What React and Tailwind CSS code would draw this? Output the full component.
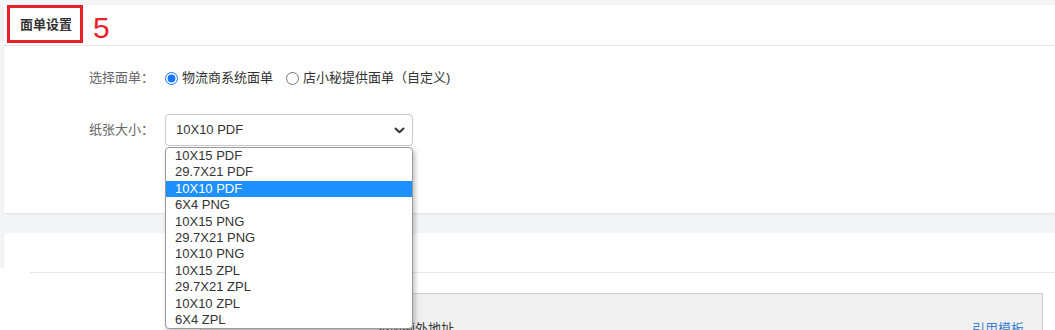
import React from "react";

const options = [
  "10X15 PDF",
  "29.7X21 PDF",
  "10X10 PDF",
  "6X4 PNG",
  "10X15 PNG",
  "29.7X21 PNG",
  "10X10 PNG",
  "10X15 ZPL",
  "29.7X21 ZPL",
  "10X10 ZPL",
  "6X4 ZPL",
];

export default function App() {
  return (
    <div
      className="relative w-[1055px] h-[330px] overflow-hidden bg-[#f3f4f5] pt-[5px] pl-[4px]"
      style={{ fontFamily: '"Liberation Sans", "Noto Sans CJK SC", sans-serif' }}
    >
      {/* Card 1 */}
      <div className="bg-white h-[208px] shadow-[0_1px_2px_rgba(0,0,0,0.07)]">
        <div className="h-[41px] border-b border-[#e6e6e6] flex items-center pl-[16px]">
          <span className="text-[13px] font-bold text-[#333]">面单设置</span>
        </div>
        <div className="pl-[85px] pt-[22px]">
          <div className="flex items-center h-[20px] text-[13px]">
            <span className="w-[76px] text-[#666]">选择面单：</span>
            <label className="flex items-center text-[#333]">
              <input type="radio" name="mt" defaultChecked className="m-0 w-[13px] h-[13px] accent-[#1677ff]" />
              <span className="ml-[4px]">物流商系统面单</span>
            </label>
            <label className="flex items-center text-[#333] ml-[13px]">
              <input type="radio" name="mt" className="m-0 w-[13px] h-[13px]" />
              <span className="ml-[4px]">店小秘提供面单（自定义)</span>
            </label>
          </div>
          <div className="flex items-center mt-[26px] text-[13px]">
            <span className="w-[76px] text-[#666]">纸张大小：</span>
            <div className="relative">
              <div className="w-[248px] h-[32px] border border-[#c9c9c9] rounded-[4px] flex items-center justify-between pl-[10px] pr-[7px] text-[#333]">
                <span>10X10 PDF</span>
                <svg width="11" height="7" viewBox="0 0 11 7">
                  <path d="M1.5 1.5 L5.5 5.2 L9.5 1.5" fill="none" stroke="#333" strokeWidth="2" strokeLinecap="round" strokeLinejoin="round" />
                </svg>
              </div>
              <div className="absolute left-0 top-[33px] z-20 w-[248px] bg-white border border-[#9a9a9a] rounded-[4px] shadow-[2px_3px_5px_rgba(0,0,0,0.25)] overflow-hidden">
                {options.map((o, i) => (
                  <div
                    key={o}
                    className={
                      i === 2
                        ? "h-[16.4px] leading-[16.4px] pl-[9px] bg-[#1e90ff] text-white"
                        : "h-[16.4px] leading-[16.4px] pl-[9px] text-[#333]"
                    }
                  >
                    {o}
                  </div>
                ))}
              </div>
            </div>
          </div>
        </div>
      </div>

      {/* Card 2 */}
      <div className="bg-white mt-[20px] h-[120px] shadow-[0_1px_2px_rgba(0,0,0,0.07)]">
        <div className="h-[40px] border-b border-[#e6e6e6]" />
        <div className="pt-[20px] pl-[196px] pr-[12px]">
          <div className="bg-[#f0f0f0] border border-[#cccccc] h-[60px] pt-[25px] pl-[175px] pr-[18px] flex justify-between text-[13px] leading-[20px]">
            <span className="text-[#333]">添加额外地址</span>
            <span className="text-[#3b7fd4]">引用模板</span>
          </div>
        </div>
      </div>

      {/* redaction blobs */}
      <div className="absolute left-0 top-[268px] w-[30px] h-[70px] bg-white" />
      <div className="absolute left-0 top-[279px] w-[147px] h-[60px] bg-white rounded-[12px]" />

      {/* annotation */}
      <div className="absolute left-[7px] top-[5px] w-[76px] h-[38px] border-[3px] border-[#e8202a]" />
      <div className="absolute left-[93px] top-[13px] text-[30px] leading-[30px] text-[#e8202a]">5</div>
    </div>
  );
}
